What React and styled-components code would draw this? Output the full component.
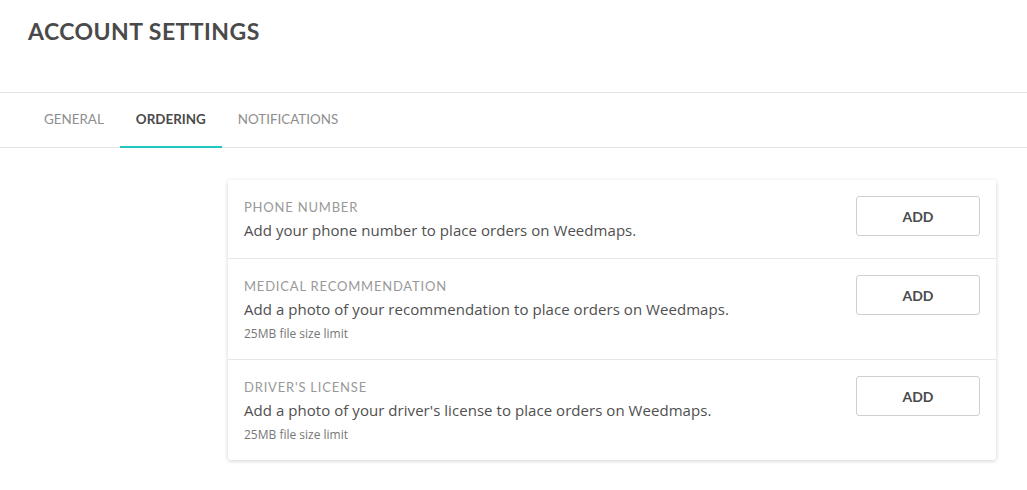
import React from "react";
import styled, { createGlobalStyle } from "styled-components";

const GlobalStyle = createGlobalStyle`
  body {
    margin: 0;
    background: #ffffff;
    font-family: "Open Sans", "Liberation Sans", sans-serif;
    color: #4a4a4a;
  }
`;

const rows = [
  {
    title: "PHONE NUMBER",
    text: "Add your phone number to place orders on Weedmaps.",
  },
  {
    title: "MEDICAL RECOMMENDATION",
    text: "Add a photo of your recommendation to place orders on Weedmaps.",
    note: "25MB file size limit",
  },
  {
    title: "DRIVER'S LICENSE",
    text: "Add a photo of your driver's license to place orders on Weedmaps.",
    note: "25MB file size limit",
  },
];

const tabs = ["GENERAL", "ORDERING", "NOTIFICATIONS"];

export default function App() {
  const [active, setActive] = React.useState("ORDERING");

  return (
    <>
      <GlobalStyle />
      <Header>
        <Title>ACCOUNT SETTINGS</Title>
      </Header>
      <TabBar>
        {tabs.map((t) => (
          <Tab key={t} active={t === active} onClick={() => setActive(t)}>
            {t}
          </Tab>
        ))}
      </TabBar>
      <Content>
        <div />
        <Card>
          {rows.map((r) => (
            <Row key={r.title}>
              <RowText>
                <Label>{r.title}</Label>
                <Desc>{r.text}</Desc>
                {r.note && <Note>{r.note}</Note>}
              </RowText>
              <AddBtn>ADD</AddBtn>
            </Row>
          ))}
        </Card>
      </Content>
    </>
  );
}

//styled-components

const Header = styled.div`
  height: 93px;
  padding: 17px 28px 0;
  box-sizing: border-box;
  border-bottom: 1px solid #e3e3e3;
`;

const Title = styled.h1`
  margin: 0;
  font-family: "Lato", "Liberation Sans", sans-serif;
  font-weight: 700;
  font-size: 23px;
  line-height: 28px;
  color: #4a4a4a;
  letter-spacing: 0.45px;
`;

const TabBar = styled.div`
  display: flex;
  padding-left: 28px;
  height: 54px;
  border-bottom: 1px solid #e3e3e3;
`;

const Tab = styled.button`
  background: none;
  border: none;
  border-bottom: 2px solid ${(p) => (p.active ? "#1fc7be" : "transparent")};
  margin-bottom: -1px;
  padding: 0 16px 2px;
  font-family: "Lato", "Liberation Sans", sans-serif;
  font-size: 13.4px;
  font-weight: ${(p) => (p.active ? 700 : 400)};
  color: ${(p) => (p.active ? "#4a4a4a" : "#8e8e8e")};
  cursor: pointer;
  outline: none;
`;

const Content = styled.div`
  display: grid;
  grid-template-columns: 200px 1fr;
  padding: 32px 31px 30px 28px;
`;

const Card = styled.div`
  background: #fff;
  border-radius: 3px;
  box-shadow: 0 1px 4px rgba(0, 0, 0, 0.18);
`;

const Row = styled.div`
  display: flex;
  justify-content: space-between;
  align-items: flex-start;
  padding: 16px;
  & + & {
    border-top: 1px solid #e6e6e6;
  }
`;

const RowText = styled.div`
  display: flex;
  flex-direction: column;
`;

const Label = styled.div`
  font-family: "Lato", "Liberation Sans", sans-serif;
  font-size: 13px;
  line-height: 22px;
  letter-spacing: 0.8px;
  color: #999999;
`;

const Desc = styled.div`
  font-size: 15px;
  line-height: 24px;
  letter-spacing: 0.05px;
  color: #4f4f4f;
`;

const Note = styled.div`
  font-size: 12px;
  line-height: 18px;
  margin-top: 4px;
  color: #777777;
`;

const AddBtn = styled.button`
  width: 124px;
  height: 40px;
  background: #fff;
  border: 1px solid #cfcfcf;
  border-radius: 3px;
  font-family: "Lato", "Liberation Sans", sans-serif;
  font-weight: 700;
  font-size: 14px;
  color: #4a4a4a;
  cursor: pointer;
  outline: none;
`;
